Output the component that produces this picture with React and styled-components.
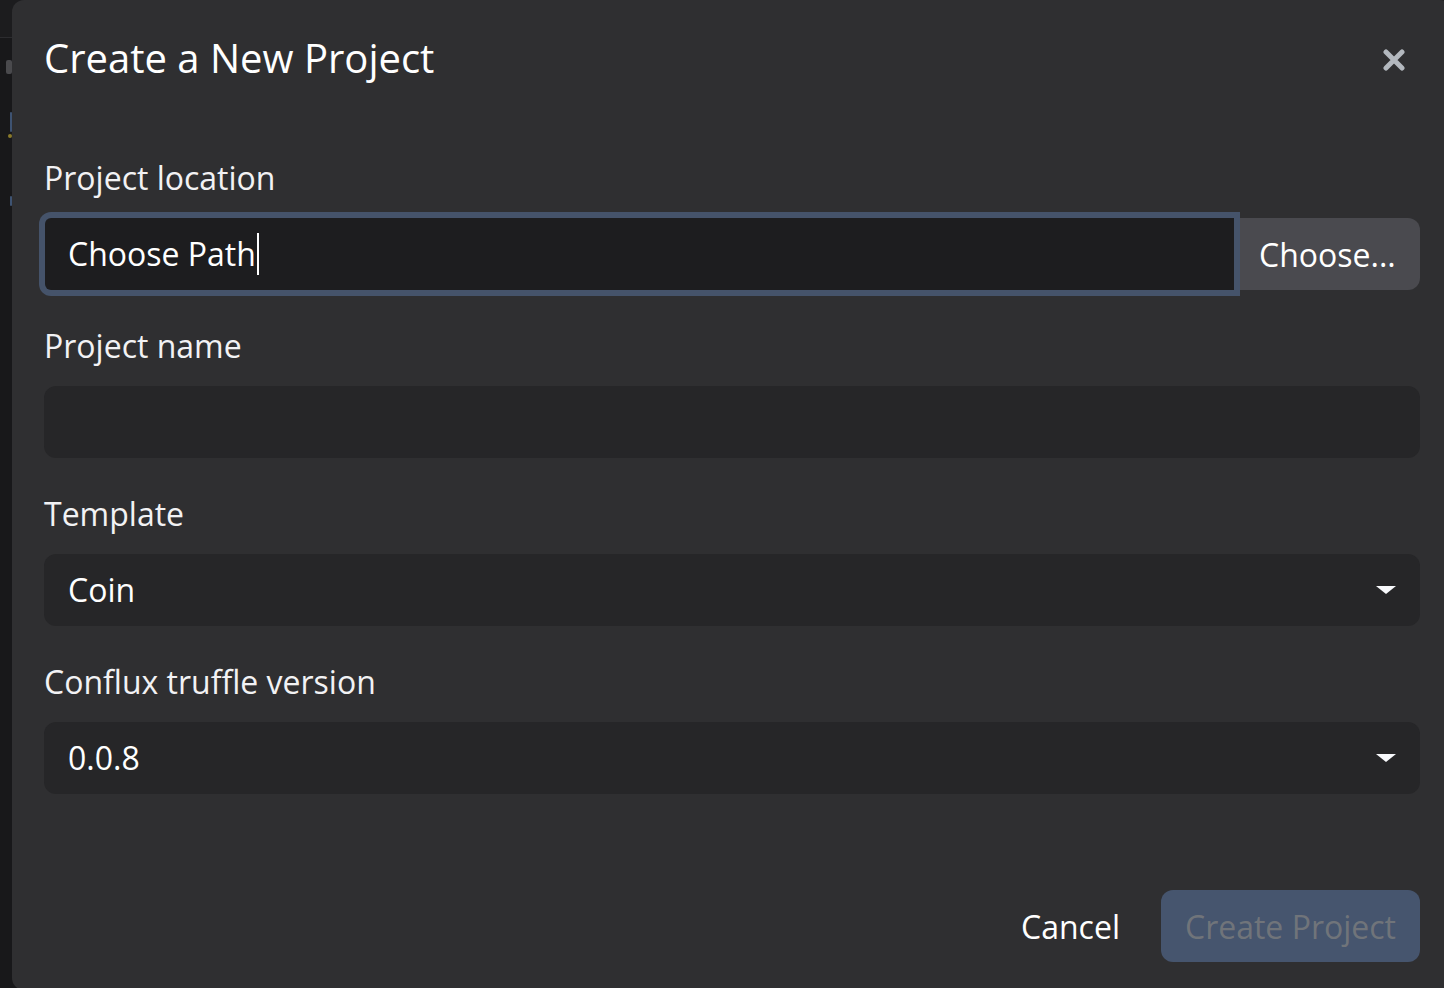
import React, { useState } from "react";
import { createGlobalStyle, styled } from "styled-components";

const GlobalStyle = createGlobalStyle`
  html, body {
    margin: 0;
    padding: 0;
    height: 100%;
    overflow: hidden;
    background: #18181a;
    font-family: "Open Sans", "Noto Sans", "Liberation Sans", sans-serif;
  }
  #root {
    height: 100%;
  }
  * {
    box-sizing: border-box;
  }
`;

const Backdrop = styled.div`
  position: relative;
  height: 988px;
  width: 1444px;
  overflow: hidden;
  background: #18181a;
`;

const AppBar = styled.div`
  height: 38px;
  background: #1c1c1e;
  border-bottom: 1px solid #2c2c2f;
`;

const Peek = styled.div`
  position: absolute;
  left: ${(p) => p.x}px;
  top: ${(p) => p.y}px;
  width: ${(p) => p.w}px;
  height: ${(p) => p.h}px;
  background: ${(p) => p.color};
  border-radius: 2px;
`;

const Modal = styled.div`
  position: absolute;
  left: 12px;
  top: 0;
  width: 1440px;
  height: 990px;
  background: #2f2f31;
  border-radius: 12px;
  display: flex;
  flex-direction: column;
`;

const Header = styled.div`
  display: flex;
  align-items: center;
  justify-content: space-between;
  padding: 28px 32px 0 32px;
`;

const Title = styled.h5`
  margin: 0;
  font-size: 40px;
  line-height: 60px;
  font-weight: 400;
  color: #ffffff;
`;

const CloseButton = styled.button`
  border: none;
  background: none;
  padding: 0;
  width: 24px;
  height: 24px;
  margin: 4px 14px 0 0;
  display: flex;
  align-items: center;
  justify-content: center;
  cursor: pointer;
`;

const Body = styled.div`
  padding: 66px 32px 0 32px;
`;

const Group = styled.div`
  margin-bottom: 32px;
`;

const Label = styled.label`
  display: block;
  font-size: 32px;
  line-height: 48px;
  color: #f2f2f4;
  margin-bottom: 16px;
`;

const InputGroup = styled.div`
  display: flex;
  align-items: stretch;
  height: 72px;
`;

const FocusedField = styled.div`
  flex: 1;
  margin: 0 6px 0 1px;
  display: flex;
  align-items: center;
  padding: 0 23px;
  background: #1d1d1f;
  border-radius: 6px 0 0 6px;
  box-shadow: 0 0 0 6px #45536a;
  font-size: 32px;
  line-height: 48px;
  color: #ffffff;
`;

const Caret = styled.span`
  display: inline-block;
  width: 2px;
  height: 42px;
  margin-left: 1px;
  background: #ffffff;
`;

const AppendButton = styled.button`
  width: 180px;
  border: none;
  background: #4a4a4f;
  color: #ffffff;
  font-family: inherit;
  font-size: 32px;
  border-radius: 0 12px 12px 0;
  padding: 0 0 0 19px;
  text-align: left;
  cursor: pointer;
`;

const Input = styled.input`
  display: block;
  width: 100%;
  height: 72px;
  border: none;
  outline: none;
  border-radius: 12px;
  background: #262628;
  padding: 0 24px;
  font-family: inherit;
  font-size: 32px;
  color: #ffffff;
`;

const SelectBox = styled.div`
  height: 72px;
  border-radius: 12px;
  background: #262628;
  padding: 0 24px;
  display: flex;
  align-items: center;
  justify-content: space-between;
  font-size: 32px;
  line-height: 48px;
  color: #ffffff;
  cursor: pointer;
`;

const Arrow = styled.span`
  width: 0;
  height: 0;
  border-left: 10px solid transparent;
  border-right: 10px solid transparent;
  border-top: 8px solid #f8f9fc;
  margin-right: 0;
`;

const Footer = styled.div`
  display: flex;
  justify-content: flex-end;
  align-items: center;
  gap: 17px;
  padding: 64px 32px 0 32px;
`;

const FooterButton = styled.button`
  height: 72px;
  padding: 0 24px;
  border: none;
  border-radius: 12px;
  font-family: inherit;
  font-size: 32px;
  background: ${(p) => (p.primary ? "#46556e" : "transparent")};
  color: ${(p) => (p.primary ? "#70747a" : "#ffffff")};
  cursor: ${(p) => (p.disabled ? "default" : "pointer")};
`;

function CloseIcon() {
  return (
    <svg width="22" height="22" viewBox="0 0 22 22">
      <path
        d="M3 3 L19 19 M19 3 L3 19"
        stroke="#b3b8be"
        strokeWidth="5"
        strokeLinecap="round"
      />
    </svg>
  );
}

function Select({ value }) {
  return (
    <SelectBox>
      <span>{value}</span>
      <Arrow />
    </SelectBox>
  );
}

export default function App() {
  const [name, setName] = useState("");

  return (
    <Backdrop>
      <GlobalStyle />
      <AppBar />
      <Peek x={6} y={60} w={6} h={14} color="#4a4a4d" />
      <Peek x={10} y={112} w={2} h={20} color="#3e5372" />
      <Peek x={8} y={134} w={4} h={4} color="#8a7a2a" />
      <Peek x={10} y={196} w={2} h={10} color="#3e5372" />
      <Modal>
        <Header>
          <Title>Create a New Project</Title>
          <CloseButton aria-label="Close">
            <CloseIcon />
          </CloseButton>
        </Header>
        <Body>
          <Group>
            <Label>Project location</Label>
            <InputGroup>
              <FocusedField role="textbox">
                Choose Path
                <Caret />
              </FocusedField>
              <AppendButton>Choose...</AppendButton>
            </InputGroup>
          </Group>
          <Group>
            <Label>Project name</Label>
            <Input value={name} onChange={(e) => setName(e.target.value)} />
          </Group>
          <Group>
            <Label>Template</Label>
            <Select value="Coin" />
          </Group>
          <Group>
            <Label>Conflux truffle version</Label>
            <Select value="0.0.8" />
          </Group>
        </Body>
        <Footer>
          <FooterButton>Cancel</FooterButton>
          <FooterButton primary disabled>
            Create Project
          </FooterButton>
        </Footer>
      </Modal>
    </Backdrop>
  );
}
